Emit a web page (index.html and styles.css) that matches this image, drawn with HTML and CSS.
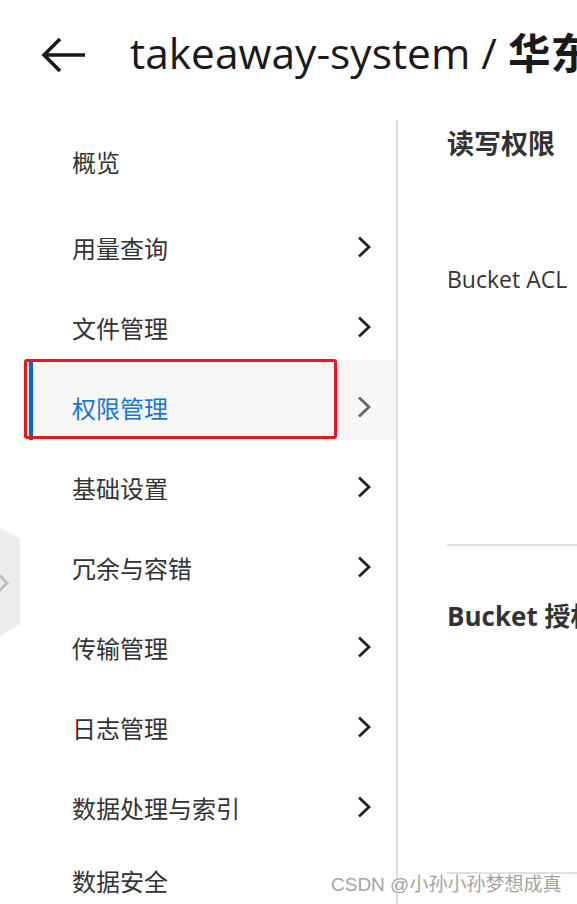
FILE: index.html
```html
<!DOCTYPE html>
<html lang="zh-CN">
<head>
<meta charset="utf-8">
<title>takeaway-system</title>
<link rel="stylesheet" href="styles.css">
</head>
<body>
<div class="page">
  <header class="header">
    <svg class="back" width="46" height="38" viewBox="0 0 46 38">
      <path d="M44 19 H3 M19 3 L3 19 L19 35" fill="none" stroke="#1a1a1a" stroke-width="3.6" stroke-linecap="butt" stroke-linejoin="miter"/>
    </svg>
    <h1 class="title">takeaway-system / <b>华东上海</b></h1>
  </header>
  <div class="main">
    <nav class="sidebar">
      <div class="item">概览</div>
      <div class="item sub"><span>用量查询</span><svg class="chev" viewBox="0 0 14 22"><path d="M2 1.5 L12 11 L2 20.5" /></svg></div>
      <div class="item sub"><span>文件管理</span><svg class="chev" viewBox="0 0 14 22"><path d="M2 1.5 L12 11 L2 20.5" /></svg></div>
      <div class="item sub active"><span>权限管理</span><svg class="chev" viewBox="0 0 14 22"><path d="M2 1.5 L12 11 L2 20.5" /></svg><div class="mark"></div></div>
      <div class="item sub"><span>基础设置</span><svg class="chev" viewBox="0 0 14 22"><path d="M2 1.5 L12 11 L2 20.5" /></svg></div>
      <div class="item sub"><span>冗余与容错</span><svg class="chev" viewBox="0 0 14 22"><path d="M2 1.5 L12 11 L2 20.5" /></svg></div>
      <div class="item sub"><span>传输管理</span><svg class="chev" viewBox="0 0 14 22"><path d="M2 1.5 L12 11 L2 20.5" /></svg></div>
      <div class="item sub"><span>日志管理</span><svg class="chev" viewBox="0 0 14 22"><path d="M2 1.5 L12 11 L2 20.5" /></svg></div>
      <div class="item sub"><span>数据处理与索引</span><svg class="chev" viewBox="0 0 14 22"><path d="M2 1.5 L12 11 L2 20.5" /></svg></div>
      <div class="item">数据安全</div>
    </nav>
    <section class="content">
      <h2 class="heading">读写权限</h2>
      <div class="label">Bucket ACL</div>
      <hr class="rule rule-1">
      <h2 class="heading heading-2">Bucket 授权策略</h2>
      <hr class="rule rule-2">
    </section>
  </div>
  <div class="side-tab">
    <svg width="20" height="110" viewBox="0 0 20 110">
      <path d="M0 0 L20 10 L20 96 L0 108 Z" fill="#ececec"/>
      <path d="M-3 45 L7 55 L-3 65" fill="none" stroke="#bdbdbd" stroke-width="3"/>
    </svg>
  </div>
  <div class="watermark">CSDN @小孙小孙梦想成真</div>
</div>
</body>
</html>
```

FILE: styles.css
```css
html, body {
  margin: 0;
  padding: 0;
  background: #fff;
}
body {
  font-family: "Open Sans", "Noto Sans CJK SC", sans-serif;
  color: #333;
  width: 577px;
  height: 904px;
  overflow: hidden;
}
.page {
  position: relative;
  width: 577px;
  height: 904px;
  overflow: hidden;
}
.header {
  height: 120px;
  display: flex;
  align-items: flex-start;
  white-space: nowrap;
}
.back {
  flex: none;
  margin: 36px 0 0 41px;
}
.title {
  margin: 23px 0 0 43px;
  font-size: 42.5px;
  font-weight: 400;
  line-height: 56px;
  color: #1a1a1a;
  font-family: "Open Sans", "Noto Sans CJK SC", sans-serif;
}
.title b {
  font-weight: 700;
  font-family: "Noto Sans CJK SC", sans-serif;
}
.main {
  display: flex;
  height: 784px;
}
.sidebar {
  width: 367px;
  margin-left: 29px;
  border-right: 2px solid #e0e0e0;
  flex: none;
}
.item {
  position: relative;
  height: 80px;
  display: flex;
  align-items: center;
  justify-content: space-between;
  padding: 0 25px 0 43px;
  font-family: "Noto Sans CJK SC", sans-serif;
  font-size: 24px;
  color: #333;
  box-sizing: border-box;
}
.item:first-child {
  padding-top: 2px;
}
.item.sub {
  padding-top: 14px;
}
.chev {
  width: 14px;
  height: 22px;
  flex: none;
}
.chev path {
  fill: none;
  stroke: #222;
  stroke-width: 2.8;
}
.item.active {
  background: #f6f6f6;
  color: #1a73d1;
  border-left: 4px solid #0a64c8;
  padding-left: 39px;
}
.item.active .chev path {
  stroke: #666;
}
.mark {
  position: absolute;
  left: -9px;
  top: -1px;
  width: 307px;
  height: 74px;
  border: 3px solid #e8161e;
  border-radius: 3px;
}
.content {
  flex: 1;
  padding-left: 49px;
  white-space: nowrap;
  overflow: hidden;
}
.heading {
  margin: 9px 0 0;
  font-family: "Noto Sans CJK SC", sans-serif;
  font-size: 27px;
  font-weight: 700;
  line-height: 27px;
  color: #333;
}
.label {
  margin-top: 110px;
  font-size: 23px;
  line-height: 26px;
  color: #333;
}
.rule {
  margin: 0;
  border: 0;
  border-top: 2px solid #e0e0e0;
}
.rule-1 {
  margin-top: 252px;
}
.heading-2 {
  margin-top: 57px;
  font-size: 26px;
  font-family: "Open Sans", "Noto Sans CJK SC", sans-serif;
}
.rule-2 {
  margin-top: 242px;
}
.side-tab {
  position: absolute;
  left: 0;
  top: 528px;
  line-height: 0;
}
.watermark {
  position: absolute;
  left: 331px;
  top: 872px;
  font-family: "Liberation Sans", "Noto Sans CJK SC", sans-serif;
  font-size: 19px;
  line-height: 26px;
  color: #a3a3a3;
  text-shadow: 0 0 2px #fff, 0 0 1px #fff;
  white-space: nowrap;
}
```
